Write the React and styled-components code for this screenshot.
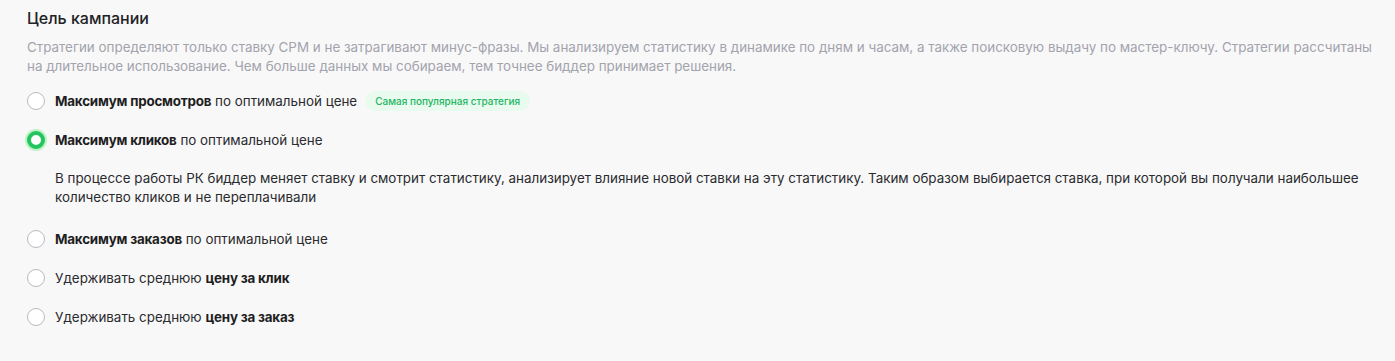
import React, { useState } from 'react';
import styled, { createGlobalStyle } from 'styled-components';

const GlobalStyle = createGlobalStyle`
    html, body {
        margin: 0;
        padding: 0;
        background: #f8f8f8;
    }
    body {
        font-family: 'Inter', 'Noto Sans', sans-serif;
        color: #1f1f22;
    }
`

const Section = styled.section`
    padding: 7px 4px 20px 27px;
    display: flex;
    flex-flow: column nowrap;
`

const Title = styled.h2`
    margin: 0;
    font-size: 16px;
    line-height: 22px;
    font-weight: 500;
    color: #222226;
`

const Lead = styled.p`
    margin: 9px 0 0 0;
    font-size: 13.4px;
    line-height: 19px;
    color: #a3a3ad;
`

const Options = styled.div`
    display: flex;
    flex-flow: column nowrap;
    margin-top: 5px;
`

const Option = styled.label`
    display: flex;
    align-items: center;
    gap: 10px;
    height: 39px;
    cursor: pointer;
    font-size: 13.4px;
    color: #2a2a2e;
`

const Radio = styled.span`
    box-sizing: border-box;
    width: 18px;
    height: 18px;
    border-radius: 50%;
    flex-shrink: 0;
    background: #ffffff;
    border: ${props => props.checked ? '4.5px solid #22c55e' : '1px solid #b9b9c2'};
    box-shadow: ${props => props.checked ? '0 0 0 2px #bff2c6' : 'none'};
`

const Label = styled.span`
    b {
        font-weight: 700;
        letter-spacing: -0.2px;
        color: #1e1e22;
    }
`

const Badge = styled.span`
    margin-left: -2px;
    padding: 4px 10px;
    border-radius: 10px;
    background: #e9fbee;
    color: #22b564;
    font-size: 10px;
    font-weight: 500;
    line-height: 12px;
`

const Details = styled.p`
    margin: 10px 0 12px 28px;
    font-size: 13.4px;
    line-height: 19px;
    color: #2a2a2e;
`

const options = [
    { id: 'views', bold: 'Максимум просмотров', rest: ' по оптимальной цене', badge: 'Самая популярная стратегия' },
    {
        id: 'clicks', bold: 'Максимум кликов', rest: ' по оптимальной цене',
        details: 'В процессе работы РК биддер меняет ставку и смотрит статистику, анализирует влияние новой ставки на эту статистику. Таким образом выбирается ставка, при которой вы получали наибольшее количество кликов и не переплачивали'
    },
    { id: 'orders', bold: 'Максимум заказов', rest: ' по оптимальной цене' },
    { id: 'cpc', pre: 'Удерживать среднюю ', bold: 'цену за клик' },
    { id: 'cpo', pre: 'Удерживать среднюю ', bold: 'цену за заказ' },
]

export default function App() {
    const [selected, setSelected] = useState('clicks');

    return (
        <>
            <GlobalStyle />
            <Section>
                <Title>Цель кампании</Title>
                <Lead>
                    Стратегии определяют только ставку CPM и не затрагивают минус-фразы. Мы анализируем статистику в динамике по дням и часам, а также поисковую выдачу по мастер-ключу. Стратегии рассчитаны на длительное использование. Чем больше данных мы собираем, тем точнее биддер принимает решения.
                </Lead>
                <Options>
                    {options.map(opt => (
                        <React.Fragment key={opt.id}>
                            <Option onClick={() => setSelected(opt.id)}>
                                <Radio checked={selected === opt.id} />
                                <Label>
                                    {opt.pre}
                                    <b>{opt.bold}</b>
                                    {opt.rest}
                                </Label>
                                {opt.badge && <Badge>{opt.badge}</Badge>}
                            </Option>
                            {selected === opt.id && opt.details && (
                                <Details>{opt.details}</Details>
                            )}
                        </React.Fragment>
                    ))}
                </Options>
            </Section>
        </>
    )
}
